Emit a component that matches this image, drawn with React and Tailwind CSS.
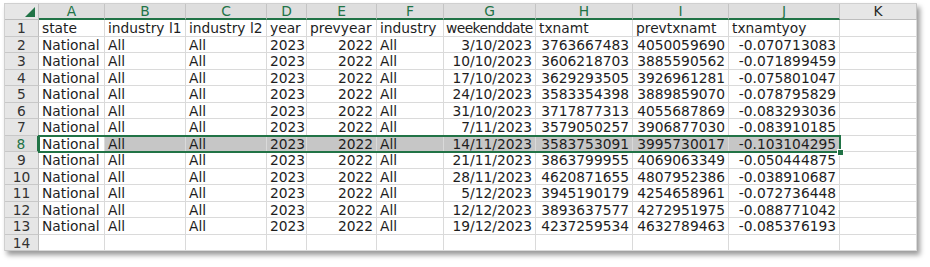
import React from "react";

const data = [
  ["3/10/2023", "3763667483", "4050059690", "-0.070713083"],
  ["10/10/2023", "3606218703", "3885590562", "-0.071899459"],
  ["17/10/2023", "3629293505", "3926961281", "-0.075801047"],
  ["24/10/2023", "3583354398", "3889859070", "-0.078795829"],
  ["31/10/2023", "3717877313", "4055687869", "-0.083293036"],
  ["7/11/2023", "3579050257", "3906877030", "-0.083910185"],
  ["14/11/2023", "3583753091", "3995730017", "-0.103104295"],
  ["21/11/2023", "3863799955", "4069063349", "-0.050444875"],
  ["28/11/2023", "4620871655", "4807952386", "-0.038910687"],
  ["5/12/2023", "3945190179", "4254658961", "-0.072736448"],
  ["12/12/2023", "3893637577", "4272951975", "-0.088771042"],
  ["19/12/2023", "4237259534", "4632789463", "-0.085376193"],
];

const cols = ["A", "B", "C", "D", "E", "F", "G", "H", "I", "J", "K"];
const headerRow = ["state", "industry l1", "industry l2", "year", "prevyear", "industry", "weekenddate", "txnamt", "prevtxnamt", "txnamtyoy", ""];

function Cell({ children, right, sel, tight }) {
  return (
    <div
      className={
        "h-[16.5px] border-r border-b border-[#dadada] whitespace-nowrap overflow-hidden leading-[16.5px] " +
        (tight ? "px-[2px] tracking-[-0.55px] " : "px-[3px] ") +
        (right ? "text-right " : "text-left ") +
        (sel ? "bg-[#c6c6c6]" : "bg-white")
      }
    >
      {children}
    </div>
  );
}

export default function App() {
  const rows = [];
  rows.push({ n: 1, cells: headerRow.map((t) => ({ t, right: false, tight: t === "weekenddate" })) });
  data.forEach((d, i) => {
    rows.push({
      n: i + 2,
      cells: [
        { t: "National" },
        { t: "All" },
        { t: "All" },
        { t: "2023", right: true },
        { t: "2022", right: true },
        { t: "All" },
        { t: d[0], right: true },
        { t: d[1], right: true },
        { t: d[2], right: true },
        { t: d[3], right: true },
        { t: "" },
      ],
    });
  });
  rows.push({ n: 14, cells: cols.map(() => ({ t: "" })) });

  return (
    <div className="w-[930px] h-[267px] bg-white pl-[4px] pt-[3px]" style={{ fontFamily: '"DejaVu Sans", Verdana, sans-serif' }}>
      <div className="relative w-[913px] border-l border-t border-[#d0d0d0] shadow-[3px_4px_5px_rgba(0,0,0,0.4)] text-[13.8px] text-[#1e1e1e]">
        <div className="grid grid-cols-[34px_66px_81px_81px_40px_70px_67px_92px_97px_96px_111px_77px]">
          <div className="h-[16px] bg-[#e6e6e6] border-r border-b border-[#bdbdbd] relative">
            <svg className="absolute right-[3px] bottom-[2px]" width="10" height="10" viewBox="0 0 10 10">
              <polygon points="10,0 10,10 0,10" fill="#217346" />
            </svg>
          </div>
          {cols.map((c) => {
            const sel = c !== "K";
            return (
              <div
                key={c}
                className={
                  "h-[16px] text-center leading-[15px] border-r border-[#c4c4c4] " +
                  (sel
                    ? "bg-[#dedede] text-[#217346] border-b-2 border-b-[#217346]"
                    : "bg-[#e6e6e6] text-[#262626] border-b border-b-[#bdbdbd]")
                }
              >
                {c}
              </div>
            );
          })}
          {rows.map((r) => {
            const selRow = r.n === 8;
            return (
              <React.Fragment key={r.n}>
                <div
                  className={
                    "h-[16.5px] leading-[16.5px] text-center border-b border-[#c8c8c8] " +
                    (selRow
                      ? "bg-[#dedede] text-[#217346] border-r-2 border-r-[#217346]"
                      : "bg-[#e6e6e6] text-[#333] border-r border-r-[#bdbdbd]")
                  }
                >
                  {r.n}
                </div>
                {r.cells.map((c, i) => (
                  <Cell key={i} right={c.right} tight={c.tight} sel={selRow && i > 0 && i < 10}>
                    {c.t}
                  </Cell>
                ))}
              </React.Fragment>
            );
          })}
        </div>
        <div className="absolute left-[33px] top-[131px] w-[803px] h-[18px] border-2 border-[#217346] pointer-events-none">
          <div className="absolute right-[-5px] bottom-[-5px] w-[7px] h-[7px] bg-[#217346] border border-white"></div>
        </div>
      </div>
    </div>
  );
}
